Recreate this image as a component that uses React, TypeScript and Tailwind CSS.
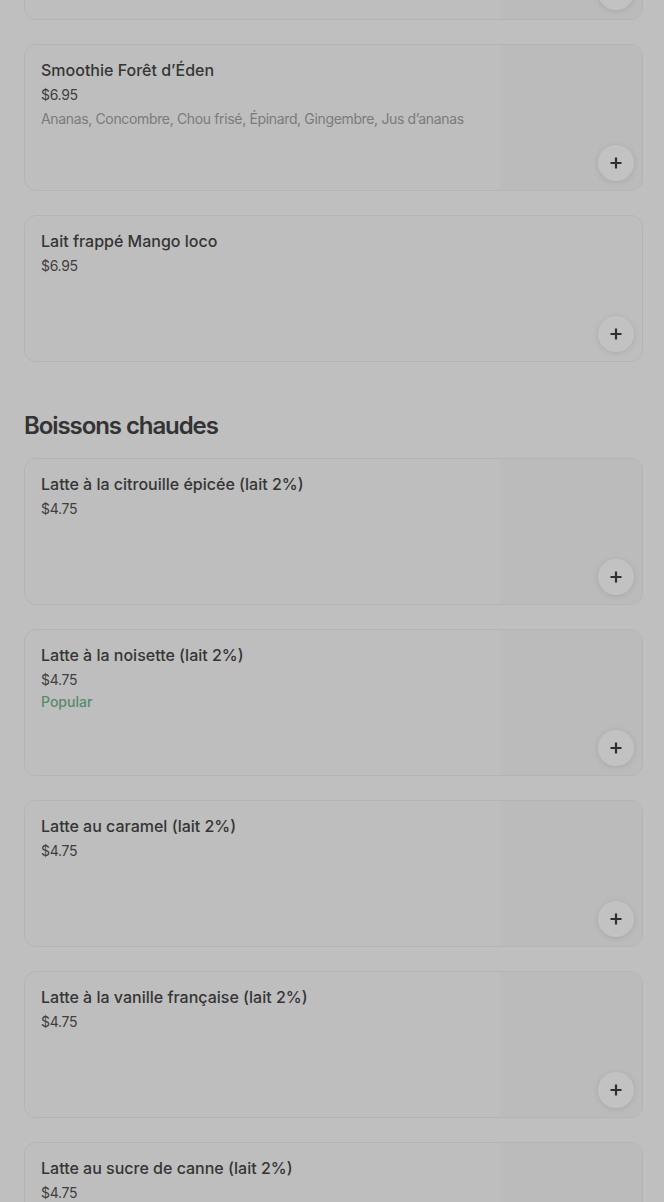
import React from 'react';

type Item = {
  name: string;
  price: string;
  desc?: string;
  popular?: boolean;
  image?: boolean;
};

const cold: Item[] = [
  { name: 'Smoothie Forêt d\u2019Éden', price: '$6.95', desc: 'Ananas, Concombre, Chou frisé, Épinard, Gingembre, Jus d\u2019ananas', image: true },
  { name: 'Lait frappé Mango loco', price: '$6.95' },
];

const hot: Item[] = [
  { name: 'Latte à la citrouille épicée (lait 2%)', price: '$4.75', image: true },
  { name: 'Latte à la noisette (lait 2%)', price: '$4.75', popular: true, image: true },
  { name: 'Latte au caramel (lait 2%)', price: '$4.75', image: true },
  { name: 'Latte à la vanille française (lait 2%)', price: '$4.75', image: true },
  { name: 'Latte au sucre de canne (lait 2%)', price: '$4.75', image: true },
];

const PlusButton = () => (
  <button className="absolute right-2 bottom-[9px] w-9 h-9 rounded-full bg-[#c2c2c2] shadow-[0_1px_6px_rgba(0,0,0,0.1)] flex items-center justify-center">
    <svg width="12" height="12" viewBox="0 0 12 12" fill="none">
      <path d="M6 0.5v11M0.5 6h11" stroke="#2f2f2f" strokeWidth="2.2" />
    </svg>
  </button>
);

const Card = ({ item, className = '' }: { item: Item; className?: string }) => (
  <div className={`relative flex h-[147px] rounded-xl border border-[#b4b4b4] bg-[#bebebe] overflow-hidden ${className}`}>
    <div className="flex-1 min-w-0 px-4 pt-[15px]">
      <div className="text-base font-medium leading-5 text-[#353535]">{item.name}</div>
      <div className="mt-[5px] text-sm leading-5 tracking-[-0.3px] text-[#3f3f3f]">{item.price}</div>
      {item.desc && (
        <div className="mt-1 whitespace-nowrap text-sm leading-5 tracking-[-0.35px] text-[#7b7b7b]">{item.desc}</div>
      )}
      {item.popular && <div className="mt-[2px] text-sm font-medium leading-5 text-[#568a6c]">Popular</div>}
    </div>
    {item.image && <div className="w-[142px] bg-[#bbbbbb]" />}
    <PlusButton />
  </div>
);

export default function App() {
  return (
    <div className="min-h-[1202px] w-[664px] bg-[#bfbfbf] overflow-hidden pl-6 pr-[21px] font-['Inter',sans-serif]">
      <div className="flex flex-col gap-6">
        <Card item={{ name: '', price: '', image: true }} className="-mt-[127px]" />
        {cold.map((it) => (
          <Card key={it.name} item={it} />
        ))}
      </div>
      <h2 className="mt-[48px] mb-[16px] text-2xl leading-8 font-semibold tracking-[-0.045em] text-[#333333]">Boissons chaudes</h2>
      <div className="flex flex-col gap-6">
        {hot.map((it) => (
          <Card key={it.name} item={it} />
        ))}
      </div>
    </div>
  );
}
